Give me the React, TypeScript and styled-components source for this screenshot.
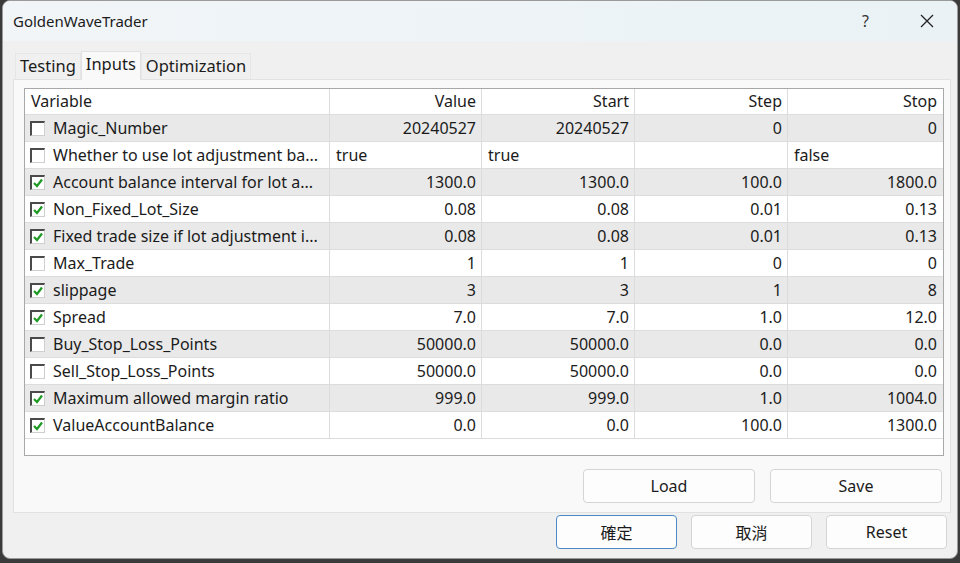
import styled, { createGlobalStyle } from 'styled-components';
import { FC } from 'react';

type Row = {
	name: string;
	checked: boolean;
	value: string;
	start: string;
	step: string;
	stop: string;
	text?: boolean;
}

const rows: Row[] = [
	{ name: 'Magic_Number', checked: false, value: '20240527', start: '20240527', step: '0', stop: '0' },
	{ name: 'Whether to use lot adjustment ba...', checked: false, value: 'true', start: 'true', step: '', stop: 'false', text: true },
	{ name: 'Account balance interval for lot a...', checked: true, value: '1300.0', start: '1300.0', step: '100.0', stop: '1800.0' },
	{ name: 'Non_Fixed_Lot_Size', checked: true, value: '0.08', start: '0.08', step: '0.01', stop: '0.13' },
	{ name: 'Fixed trade size if lot adjustment i...', checked: true, value: '0.08', start: '0.08', step: '0.01', stop: '0.13' },
	{ name: 'Max_Trade', checked: false, value: '1', start: '1', step: '0', stop: '0' },
	{ name: 'slippage', checked: true, value: '3', start: '3', step: '1', stop: '8' },
	{ name: 'Spread', checked: true, value: '7.0', start: '7.0', step: '1.0', stop: '12.0' },
	{ name: 'Buy_Stop_Loss_Points', checked: false, value: '50000.0', start: '50000.0', step: '0.0', stop: '0.0' },
	{ name: 'Sell_Stop_Loss_Points', checked: false, value: '50000.0', start: '50000.0', step: '0.0', stop: '0.0' },
	{ name: 'Maximum allowed margin ratio', checked: true, value: '999.0', start: '999.0', step: '1.0', stop: '1004.0' },
	{ name: 'ValueAccountBalance', checked: true, value: '0.0', start: '0.0', step: '100.0', stop: '1300.0' },
];

const GlobalStyle = createGlobalStyle`
	html, body {
		margin: 0;
		padding: 0;
		background: #3b3b3b;
		font-family: "Segoe UI", "Noto Sans", "Noto Sans CJK TC", sans-serif;
		color: #1b1b1b;
	}
`

const CheckBox: FC<{ checked: boolean }> = ({ checked }) => (
	<SCheck>
		{checked && (
			<svg width="12" height="12" viewBox="0 0 12 12">
				<path d="M2 6 L5 9 L10 2.5" fill="none" stroke="#1f9a24" strokeWidth="2.2" />
			</svg>
		)}
	</SCheck>
)

export default function App() {
	return (
		<>
			<GlobalStyle />
			<SWindow>
				<STitleBar>
					<STitle>GoldenWaveTrader</STitle>
					<STitleButtons>
						<SHelp>?</SHelp>
						<svg width="16" height="16" viewBox="0 0 16 16">
							<path d="M2 2 L14 14 M14 2 L2 14" stroke="#222" strokeWidth="1.3" />
						</svg>
					</STitleButtons>
				</STitleBar>
				<SBody>
					<STabs>
						<STab>Testing</STab>
						<STab active>Inputs</STab>
						<STab>Optimization</STab>
					</STabs>
					<SPanel>
						<STable>
							<SHeadRow>
								<SHeadCell>Variable</SHeadCell>
								<SHeadCell right>Value</SHeadCell>
								<SHeadCell right>Start</SHeadCell>
								<SHeadCell right>Step</SHeadCell>
								<SHeadCell right last>Stop</SHeadCell>
							</SHeadRow>
							{rows.map((r, i) => (
								<SRow key={r.name} shaded={i % 2 === 0}>
									<SNameCell>
										<CheckBox checked={r.checked} />
										<span>{r.name}</span>
									</SNameCell>
									<SCell right={!r.text}>{r.value}</SCell>
									<SCell right={!r.text}>{r.start}</SCell>
									<SCell right={!r.text}>{r.step}</SCell>
									<SCell right={!r.text} last>{r.stop}</SCell>
								</SRow>
							))}
						</STable>
						<SPanelButtons>
							<SButton wide>Load</SButton>
							<SButton wide>Save</SButton>
						</SPanelButtons>
					</SPanel>
					<SFooter>
						<SButton primary>確定</SButton>
						<SButton>取消</SButton>
						<SButton>Reset</SButton>
					</SFooter>
				</SBody>
			</SWindow>
		</>
	)
}

const SWindow = styled.div`
	margin: 0 2px;
	height: 559px;
	background: #f0f0f0;
	border-radius: 8px;
	overflow: hidden;
	border: 1px solid #9a9a9a;
	box-sizing: border-box;
`

const STitleBar = styled.div`
	height: 40px;
	display: flex;
	align-items: center;
	justify-content: space-between;
	padding: 0 22px 0 10px;
	background: linear-gradient(90deg, #f1f5f8, #eaf2f6);
`

const STitle = styled.div`
	font-size: 15px;
	color: #1b1b1b;
`

const STitleButtons = styled.div`
	display: flex;
	align-items: center;
	gap: 50px;
`

const SHelp = styled.span`
	font-size: 16px;
	color: #333;
`

const SBody = styled.div`
	padding: 11px 6px 0 10px;
`

const STab = styled.div<{ active?: boolean }>`
	font-size: 16.5px;
	padding: 0 4px;
	height: ${p => (p.active ? '28px' : '25px')};
	line-height: ${p => (p.active ? '24px' : '23px')};
	background: ${p => (p.active ? '#f9f9f9' : '#f0f0f0')};
	border: 1px solid ${p => (p.active ? '#e2e2e2' : '#e6e6e6')};
	border-bottom: none;
	margin-bottom: ${p => (p.active ? '-1px' : '0')};
	position: relative;
	z-index: ${p => (p.active ? 1 : 0)};
	color: #1b1b1b;
`

const STabs = styled.div`
	display: flex;
	align-items: flex-end;
	height: 27px;
	padding-left: 2px;
`

const SPanel = styled.div`
	background: #f9f9f9;
	border: 1px solid #e2e2e2;
	height: 434px;
	padding: 8px 8px 0 10px;
	box-sizing: border-box;
`

const STable = styled.div`
	background: #fff;
	border: 1px solid #a8a8a8;
	height: 368px;
	box-sizing: border-box;
	width: 920px;
`

const SHeadRow = styled.div`
	display: grid;
	grid-template-columns: 305px 152px 153px 153px 154px;
	height: 26px;
	box-sizing: border-box;
	border-bottom: 1px solid #dcdcdc;
`

const SRow = styled(SHeadRow)<{ shaded: boolean }>`
	height: 27px;
	background: ${p => (p.shaded ? '#e9e9e9' : '#ffffff')};
`

const SHeadCell = styled.div<{ right?: boolean; last?: boolean }>`
	font-size: 16px;
	line-height: 25px;
	padding: 0 5px 0 6px;
	text-align: ${p => (p.right ? 'right' : 'left')};
	border-right: ${p => (p.last ? 'none' : '1px solid #dcdcdc')};
	white-space: nowrap;
	overflow: hidden;
`

const SCell = styled(SHeadCell)`
	line-height: 26px;
`

const SNameCell = styled.div`
	display: flex;
	align-items: center;
	gap: 8px;
	padding-left: 5px;
	font-size: 16px;
	border-right: 1px solid #dcdcdc;
	white-space: nowrap;
	overflow: hidden;
`

const SCheck = styled.span`
	width: 15px;
	height: 15px;
	box-sizing: border-box;
	background: #fff;
	border-top: 2px solid #4a4a4a;
	border-left: 2px solid #4a4a4a;
	border-right: 1px solid #cfcfcf;
	border-bottom: 1px solid #cfcfcf;
	display: inline-flex;
	align-items: center;
	justify-content: center;
	flex: none;
`

const SPanelButtons = styled.div`
	display: flex;
	justify-content: flex-end;
	gap: 15px;
	margin-top: 13px;
`

const SFooter = styled.div`
	display: flex;
	justify-content: flex-end;
	gap: 14px;
	margin-top: 2px;
	padding-right: 4px;
`

const SButton = styled.button<{ wide?: boolean; primary?: boolean }>`
	width: ${p => (p.wide ? '172px' : '121px')};
	height: 34px;
	font-family: "Segoe UI", "Noto Sans", "Noto Sans CJK TC", sans-serif;
	font-size: 16px;
	color: #1b1b1b;
	background: #fdfdfd;
	border: 1px solid ${p => (p.primary ? '#4a8ac9' : '#d5d5d5')};
	border-radius: 4px;
	padding: 0;
`
